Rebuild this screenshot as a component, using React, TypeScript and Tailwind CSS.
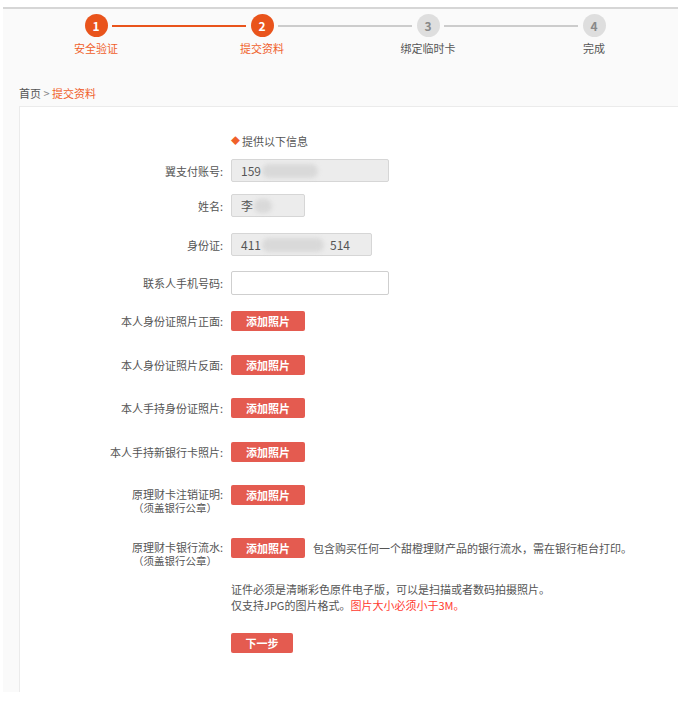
import type { ReactNode } from 'react'

const font = { fontFamily: '"Noto Sans CJK SC", "Noto Sans", sans-serif' }

const steps = [
  { n: 1, label: '安全验证', done: true },
  { n: 2, label: '提交资料', done: true },
  { n: 3, label: '绑定临时卡', done: false },
  { n: 4, label: '完成', done: false },
]

function Stepper() {
  return (
    <div className="flex items-start pl-[61px]">
      {steps.map((s, i) => (
        <div key={s.n} className="contents">
          {i > 0 && (
            <div
              className={
                'mx-[-16px] mt-[11px] h-[2px] flex-1 ' +
                (s.done ? 'bg-[#e9541c]' : 'bg-[#cccccc]')
              }
            />
          )}
          <div className="flex w-[64px] flex-col items-center">
            <div
              className={
                'flex h-[23px] w-[23px] items-center justify-center rounded-full text-[12px] font-bold ' +
                (s.done ? 'bg-[#e9541c] text-white' : 'bg-[#dedede] text-[#888]')
              }
            >
              {s.n}
            </div>
            <div
              className={
                'mt-[4px] whitespace-nowrap text-[11px] leading-[14px] ' +
                (s.done ? 'text-[#f0602a]' : 'text-[#555]')
              }
            >
              {s.label}
            </div>
          </div>
        </div>
      ))}
      <div className="w-[52px]" />
    </div>
  )
}

function Blur({ w }: { w: number }) {
  return (
    <span
      className="ml-[1px] inline-block h-[14px] rounded-full bg-[#d9d9d9] blur-[2px]"
      style={{ width: w }}
    />
  )
}

function Row({
  label,
  sub,
  mt,
  children,
  center = true,
}: {
  label: string
  sub?: boolean
  mt: number
  children: ReactNode
  center?: boolean
}) {
  return (
    <div className={'flex ' + (center ? 'items-center' : 'items-start')} style={{ marginTop: mt }}>
      <div className={'w-[203px] text-right text-[11px] leading-[14px] text-[#555] ' + (center ? '' : 'pt-[2px]')}>
        <div>{label}</div>
        {sub && <div className="pr-[6px] text-[10.5px]">（须盖银行公章）</div>}
      </div>
      <div className="flex items-center pl-[8px]">{children}</div>
    </div>
  )
}

function AddBtn() {
  return (
    <button
      type="button"
      className="h-[20px] w-[74px] rounded-[2px] bg-[#e45b50] text-[11px] font-bold leading-[20px] text-white"
    >
      添加照片
    </button>
  )
}

function ReadInput({ w, children }: { w: number; children: ReactNode }) {
  return (
    <div
      className="flex h-[23px] items-center rounded-[2px] border border-[#d6d6d6] bg-[#ececec] pl-[9px] text-[12px] text-[#555]"
      style={{ width: w }}
    >
      {children}
    </div>
  )
}

export default function App() {
  return (
    <div className="h-[705px] w-[685px] overflow-hidden bg-white" style={font}>
      <div className="ml-[3px] mt-[7px] flex h-[685px] w-[675px] flex-col border-t-2 border-[#d6d6d6] bg-[#fafafa]">
        <div className="pt-[5px]">
          <Stepper />
        </div>
        <div className="mt-[31px] pl-[16px] text-[11px] leading-[14px] text-[#555]">
          首页 <span className="text-[#888]">&gt;</span>{' '}
          <span className="text-[#f0602a]">提交资料</span>
        </div>
        <div className="ml-[16px] mt-[6px] flex-1 border-l border-t border-[#ebebeb] bg-white pt-[26px]">
          <div className="flex items-center pl-[211px] text-[11px] leading-[16px] text-[#555]">
            <span className="mr-[2px] text-[9px] text-[#f0602a]">◆</span>
            提供以下信息
          </div>
          <Row label="翼支付账号:" mt={10}>
            <ReadInput w={158}>
              159
              <Blur w={56} />
            </ReadInput>
          </Row>
          <Row label="姓名:" mt={12}>
            <ReadInput w={74}>
              李
              <Blur w={18} />
            </ReadInput>
          </Row>
          <Row label="身份证:" mt={16}>
            <ReadInput w={141}>
              411
              <Blur w={62} />
              <span className="ml-[6px]">514</span>
            </ReadInput>
          </Row>
          <Row label="联系人手机号码:" mt={15}>
            <div className="h-[24px] w-[158px] rounded-[2px] border border-[#cfcfcf] bg-white" />
          </Row>
          <Row label="本人身份证照片正面:" mt={16}>
            <AddBtn />
          </Row>
          <Row label="本人身份证照片反面:" mt={24}>
            <AddBtn />
          </Row>
          <Row label="本人手持身份证照片:" mt={23}>
            <AddBtn />
          </Row>
          <Row label="本人手持新银行卡照片:" mt={24}>
            <AddBtn />
          </Row>
          <Row label="原理财卡注销证明:" sub mt={23} center={false}>
            <AddBtn />
          </Row>
          <Row label="原理财卡银行流水:" sub mt={23} center={false}>
            <AddBtn />
            <span className="ml-[8px] whitespace-nowrap text-[11px] text-[#555]">
              包含购买任何一个甜橙理财产品的银行流水，需在银行柜台打印。
            </span>
          </Row>
          <div className="mt-[13px] pl-[211px] text-[11px] leading-[16px] text-[#555]">
            <div>证件必须是清晰彩色原件电子版，可以是扫描或者数码拍摄照片。</div>
            <div>
              仅支持JPG的图片格式。<span className="text-[#ff3b30]">图片大小必须小于3M。</span>
            </div>
          </div>
          <div className="mt-[16px] pl-[211px]">
            <button
              type="button"
              className="h-[20px] w-[62px] rounded-[2px] bg-[#e45b50] text-[11px] font-bold leading-[20px] text-white"
            >
              下一步
            </button>
          </div>
        </div>
      </div>
    </div>
  )
}
